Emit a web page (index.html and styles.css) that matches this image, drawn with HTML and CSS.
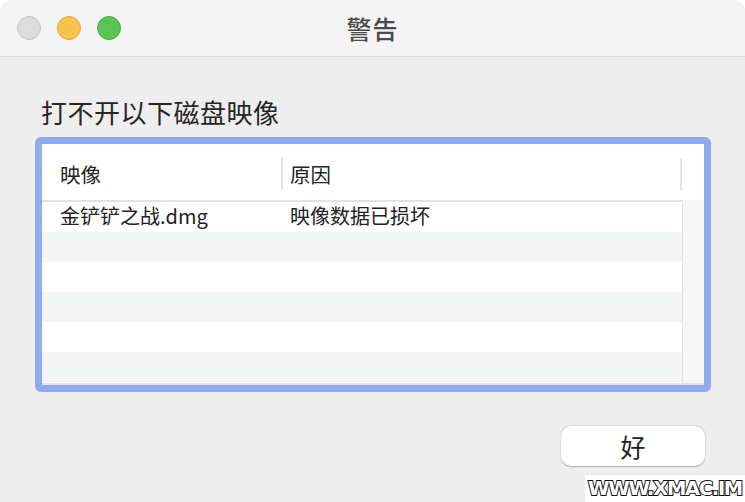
FILE: index.html
```html
<!DOCTYPE html>
<html lang="zh-CN">
<head>
<meta charset="utf-8">
<title>警告</title>
<link rel="stylesheet" href="styles.css">
</head>
<body>
<div class="window">
  <div class="titlebar">
    <div class="lights">
      <span class="light gray"></span>
      <span class="light yellow"></span>
      <span class="light green"></span>
    </div>
    <div class="title">警告</div>
    <div class="spacer"></div>
  </div>
  <div class="content">
    <h1 class="heading">打不开以下磁盘映像</h1>
    <div class="frame">
      <div class="thead">
        <div class="th col1">映像</div>
        <div class="divider"></div>
        <div class="th col2">原因</div>
        <div class="divider"></div>
      </div>
      <div class="tbody">
        <div class="rows">
          <div class="row"><div class="td col1">金铲铲之战.dmg</div><div class="td col2">映像数据已损坏</div></div>
          <div class="row alt"></div>
          <div class="row"></div>
          <div class="row alt"></div>
          <div class="row"></div>
          <div class="row alt"></div>
        </div>
        <div class="scroller"></div>
      </div>
    </div>
    <div class="actions">
      <button class="btn">好</button>
    </div>
  </div>
  <div class="watermark">WWW.XMAC.IM</div>
</div>
</body>
</html>
```

FILE: styles.css
```css
* { box-sizing: border-box; }
html, body { margin: 0; padding: 0; background: #ffffff; }
body {
  width: 745px;
  height: 502px;
  overflow: hidden;
  font-family: "Noto Sans CJK SC", "Noto Sans", sans-serif;
}
.window {
  position: relative;
  width: 745px;
  height: 502px;
  background: #eeeeee;
  border-radius: 12px 12px 0 0;
  overflow: hidden;
  display: flex;
  flex-direction: column;
}
.titlebar {
  height: 57px;
  background: #f4f4f4;
  border-bottom: 1px solid #d8d8d8;
  display: grid;
  grid-template-columns: 1fr auto 1fr;
  align-items: center;
}
.lights {
  display: flex;
  gap: 16px;
  padding-left: 17px;
}
.light {
  width: 24px;
  height: 24px;
  border-radius: 50%;
  display: block;
}
.light.gray { background: #dcdcdc; border: 1px solid #c6c6c6; }
.light.yellow { background: #f7c24f; border: 1px solid #e0a73c; }
.light.green { background: #5bc552; border: 1px solid #48ac40; }
.title {
  font-size: 25px;
  font-weight: 500;
  color: #4b4b4b;
  letter-spacing: 1px;
  line-height: 1;
}
.content {
  flex: 1;
  display: flex;
  flex-direction: column;
  padding: 0 34px 0 35px;
}
.heading {
  margin: 37px 0 0 6px;
  font-size: 26px;
  font-weight: 400;
  line-height: 36px;
  color: #262626;
  letter-spacing: 0.5px;
}
.frame {
  margin-top: 7px;
  width: 676px;
  height: 255px;
  border: 7px solid #8eabed;
  border-radius: 6px;
  background: #ffffff;
  display: flex;
  flex-direction: column;
  overflow: hidden;
}
.thead {
  height: 56px;
  display: flex;
  align-items: center;
}
.th {
  font-size: 20.5px;
  color: #232323;
  line-height: 1;
  padding-top: 4px;
}
.col1 { width: 239px; padding-left: 18px; }
.thead .col2 { width: 397px; padding-left: 7px; }
.divider {
  width: 2px;
  height: 32px;
  background: #e2e2e2;
  margin-top: 4px;
}
.tbody {
  flex: 1;
  display: flex;
  border-bottom: 2px solid #e3e3e3;
}
.rows {
  flex: 1;
  border-top: 2px solid #e2e2e2;
}
.row {
  height: 30px;
  display: flex;
  align-items: center;
  background: #ffffff;
}
.row.alt { background: #f3f4f4; }
.td {
  font-size: 20px;
  color: #222222;
  line-height: 1;
  padding-bottom: 2px;
}
.row .col1 { width: 240px; }
.row .col2 { padding-left: 8px; }
.scroller {
  width: 22px;
  background: #f7f7f7;
  border-left: 1px solid #e4e4e4;
}
.actions {
  display: flex;
  justify-content: flex-end;
  padding-top: 34px;
  padding-right: 6px;
}
.btn {
  width: 144px;
  height: 40px;
  border: none;
  border-radius: 10px;
  background: #ffffff;
  box-shadow: 0 0.5px 1.5px rgba(0,0,0,0.25), 0 0 0 0.5px rgba(0,0,0,0.06);
  font-family: "Noto Sans CJK SC", sans-serif;
  font-size: 25px;
  color: #222222;
  line-height: 1;
  padding: 0;
}
.watermark {
  position: absolute;
  right: 0;
  bottom: 0;
  width: 160px;
  height: 27px;
  background: #ffffff;
  font-family: "DejaVu Sans", "Liberation Sans", sans-serif;
  font-weight: 700;
  font-size: 19.5px;
  line-height: 28px;
  color: #ffffff;
  -webkit-text-stroke: 2px #111111;
  paint-order: stroke fill;
  text-align: center;
  letter-spacing: -1.3px;
}
```
